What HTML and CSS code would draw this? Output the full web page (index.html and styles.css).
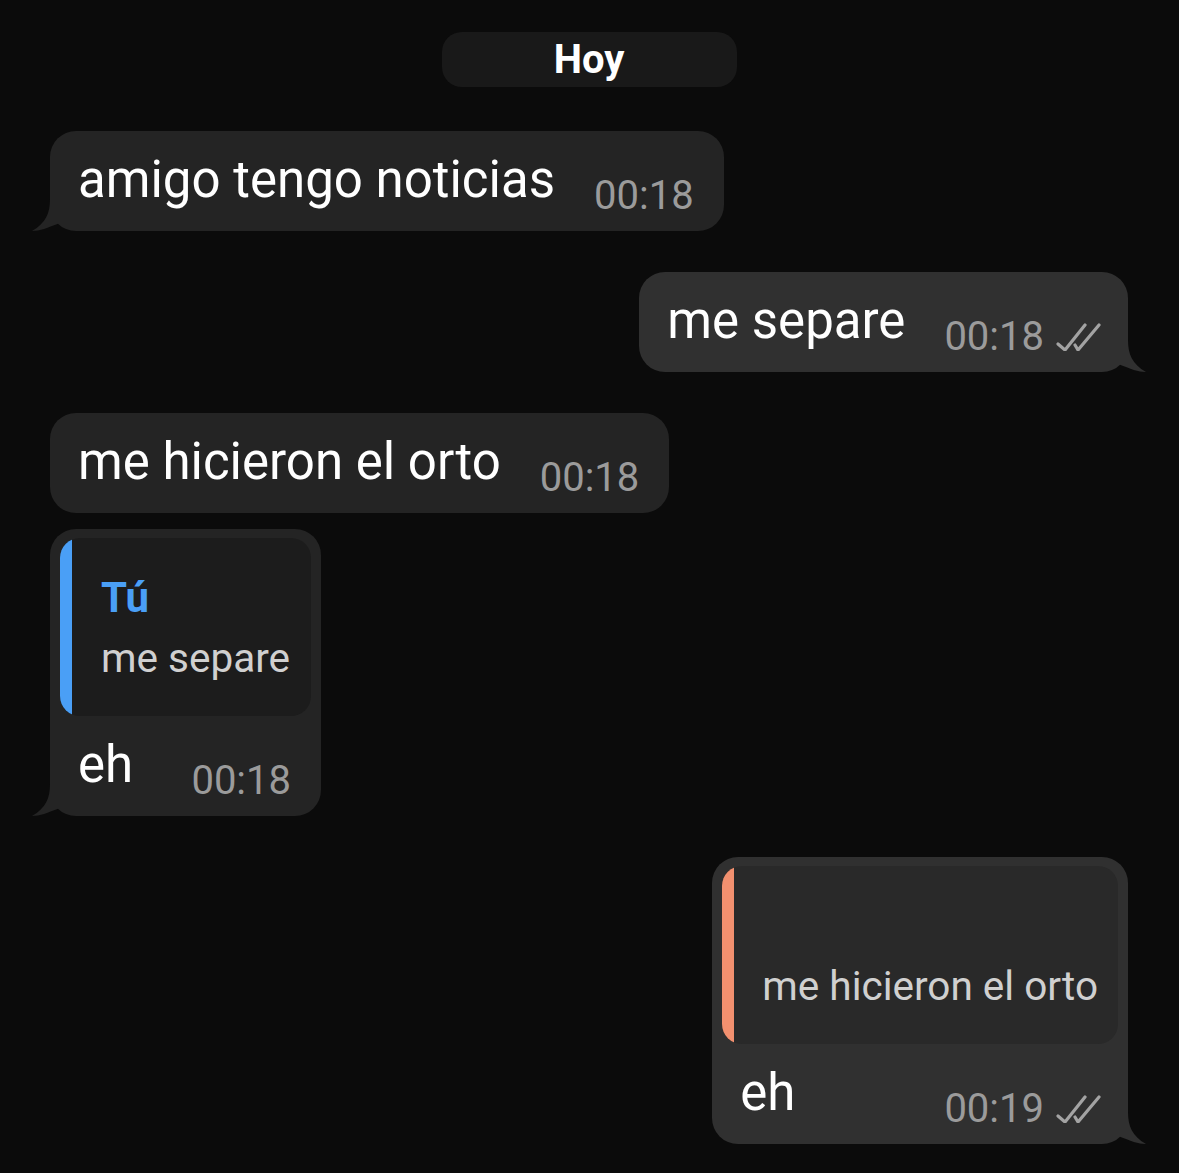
FILE: index.html
```html
<!DOCTYPE html>
<html lang="es">
<head>
<meta charset="utf-8">
<title>Chat</title>
<link rel="stylesheet" href="styles.css">
</head>
<body>
<div class="chat">
  <div class="date">Hoy</div>

  <div class="bubble in gap-date">
    <div class="line">
      <span class="txt">amigo tengo noticias</span>
      <span class="meta"><span class="time">00:18</span></span>
    </div>
    <svg class="tail" width="28" height="32" viewBox="0 0 28 32"><path d="M18,0 C18,14 14,24 0,32 C8,32 15,29 28,24 L28,0 Z"/></svg>
  </div>

  <div class="bubble out gap">
    <div class="line">
      <span class="txt">me separe</span>
      <span class="meta"><span class="time">00:18</span>
        <svg class="checks" width="46" height="28" viewBox="0 0 46 28"><path d="M3,21 L10,27 L30,2 M20,22 L23,27 L44,2"/></svg>
      </span>
    </div>
    <svg class="tail" width="28" height="32" viewBox="0 0 28 32"><path d="M18,0 C18,14 14,24 0,32 C8,32 15,29 28,24 L28,0 Z"/></svg>
  </div>

  <div class="bubble in gap">
    <div class="line">
      <span class="txt">me hicieron el orto</span>
      <span class="meta"><span class="time">00:18</span></span>
    </div>
  </div>

  <div class="bubble in gap-small">
    <div class="quote">
      <div class="bar blue"></div>
      <div class="qbody">
        <div class="qname">Tú</div>
        <div class="qtext">me separe</div>
      </div>
    </div>
    <div class="line">
      <span class="txt">eh</span>
      <span class="meta"><span class="time">00:18</span></span>
    </div>
    <svg class="tail" width="28" height="32" viewBox="0 0 28 32"><path d="M18,0 C18,14 14,24 0,32 C8,32 15,29 28,24 L28,0 Z"/></svg>
  </div>

  <div class="bubble out gap">
    <div class="quote">
      <div class="bar orange"></div>
      <div class="qbody">
        <div class="qname">&nbsp;</div>
        <div class="qtext">me hicieron el orto</div>
      </div>
    </div>
    <div class="line">
      <span class="txt">eh</span>
      <span class="meta"><span class="time">00:19</span>
        <svg class="checks" width="46" height="28" viewBox="0 0 46 28"><path d="M3,21 L10,27 L30,2 M20,22 L23,27 L44,2"/></svg>
      </span>
    </div>
    <svg class="tail" width="28" height="32" viewBox="0 0 28 32"><path d="M18,0 C18,14 14,24 0,32 C8,32 15,29 28,24 L28,0 Z"/></svg>
  </div>
</div>
</body>
</html>
```

FILE: styles.css
```css
html, body {
  margin: 0;
  padding: 0;
  background: #0b0b0b;
}

body {
  font-family: Roboto, "Noto Sans", "Liberation Sans", sans-serif;
  color: #ffffff;
  width: 1179px;
  height: 1173px;
  overflow: hidden;
}

.chat {
  display: flex;
  flex-direction: column;
  padding: 32px 51px 0 50px;
}

.date {
  align-self: center;
  width: 295px;
  height: 55px;
  line-height: 55px;
  border-radius: 20px;
  background: #191919;
  text-align: center;
  font-size: 40px;
  font-weight: 700;
  color: #ffffff;
}

.bubble {
  position: relative;
  border-radius: 26px;
  display: flex;
  flex-direction: column;
}

.bubble.in {
  align-self: flex-start;
  background: #242424;
}

.bubble.out {
  align-self: flex-end;
  background: #303030;
}

.gap-date { margin-top: 44px; }
.gap { margin-top: 41px; }
.gap-small { margin-top: 16px; }

.line {
  display: flex;
  align-items: flex-end;
  padding: 20px 30px 12px 28px;
}

.bubble.out .line {
  padding-right: 27px;
}

.txt {
  font-size: 51px;
  line-height: 58px;
  margin-bottom: 10px;
  white-space: nowrap;
}

.meta {
  margin-left: auto;
  padding-left: 39px;
  display: flex;
  align-items: flex-end;
  color: #9b9b9b;
}

.time {
  font-size: 40px;
  line-height: 46px;
  white-space: nowrap;
}

.checks {
  margin-left: 11px;
  margin-bottom: 9px;
  fill: none;
  stroke: #a3a3a3;
  stroke-width: 3.2;
  stroke-linecap: round;
  stroke-linejoin: round;
}

.tail {
  position: absolute;
  bottom: 0;
}

.bubble.in .tail {
  left: -18px;
  fill: #242424;
}

.bubble.out .tail {
  right: -18px;
  transform: scaleX(-1);
  fill: #303030;
}

.quote {
  display: flex;
  margin: 9px 10px 0 10px;
  border-radius: 20px;
  overflow: hidden;
}

.bubble.in .quote { background: #1c1c1c; }
.bubble.out .quote { background: #292929; }

.bar {
  width: 12px;
  flex: none;
}

.bar.blue { background: #4a9ff6; }
.bar.orange { background: #f2906f; }

.qbody {
  padding: 35px 21px 33px 29px;
}

.bubble.out .qbody {
  padding-left: 28px;
  padding-right: 20px;
}

.qname {
  font-size: 42px;
  line-height: 50px;
  font-weight: 700;
  color: #4a9ff6;
}

.qtext {
  margin-top: 10px;
  font-size: 40.5px;
  line-height: 50px;
  color: #d0d0d0;
  white-space: nowrap;
}
```
